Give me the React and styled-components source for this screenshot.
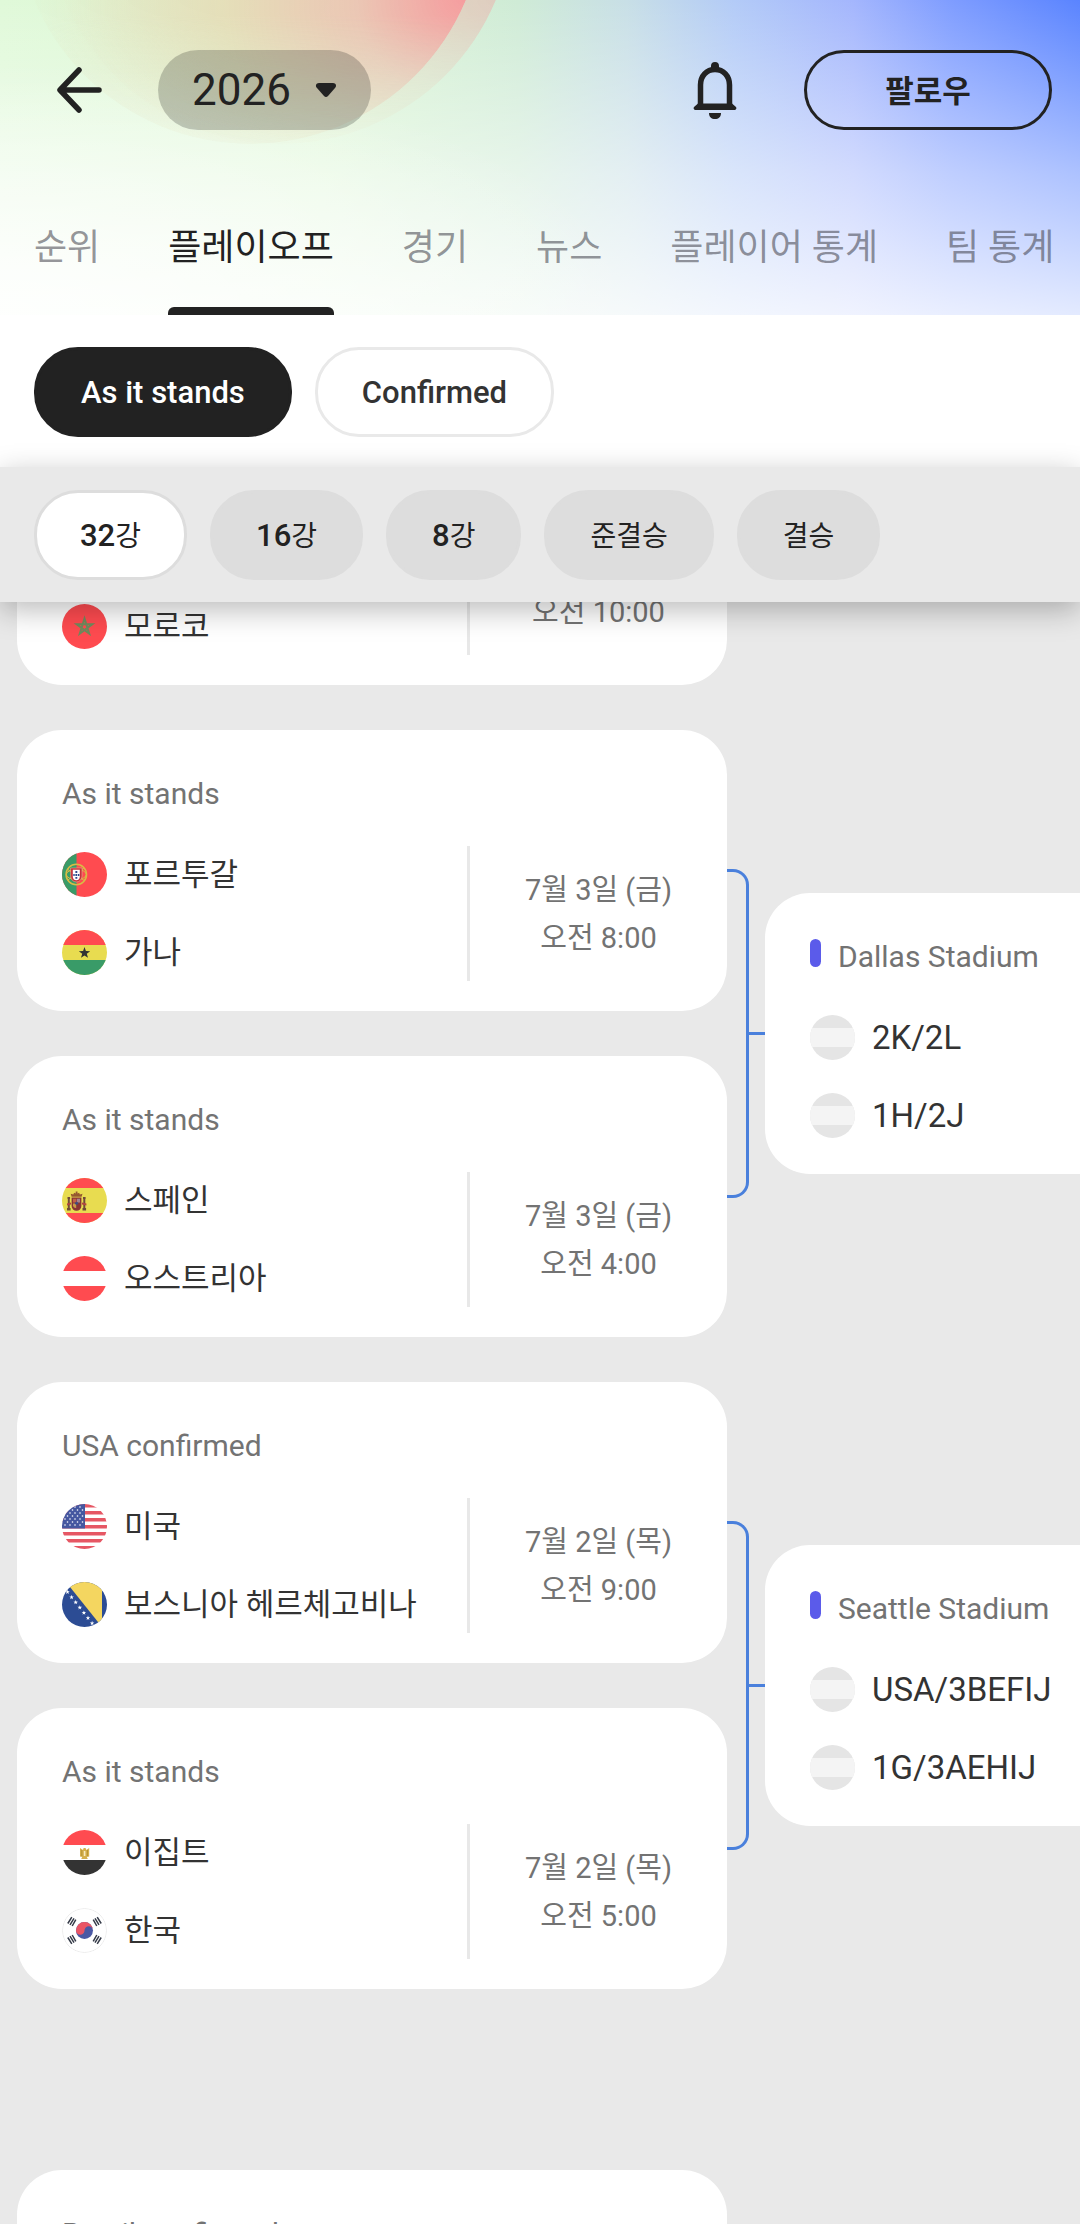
import React from 'react'
import styled, { createGlobalStyle } from 'styled-components'

const tabs = ['순위', '플레이오프', '경기', '뉴스', '플레이어 통계', '팀 통계']
const rounds = [['32', '강'], ['16', '강'], ['8', '강'], ['', '준결승'], ['', '결승']]

const pairs = [
  {
    // mostly scrolled away under the round bar
    games: [{ teams: [['', ''], ['ma', '모로코']], time: '오전 10:00' }],
  },
  {
    games: [
      { title: 'As it stands', teams: [['pt', '포르투갈'], ['gh', '가나']], date: '7월 3일 (금)', time: '오전 8:00' },
      { title: 'As it stands', teams: [['es', '스페인'], ['at', '오스트리아']], date: '7월 3일 (금)', time: '오전 4:00' },
    ],
    next: { title: 'Dallas Stadium', teams: ['2K/2L', '1H/2J'] },
  },
  {
    games: [
      { title: 'USA confirmed', teams: [['us', '미국'], ['ba', '보스니아 헤르체고비나']], date: '7월 2일 (목)', time: '오전 9:00' },
      { title: 'As it stands', teams: [['eg', '이집트'], ['kr', '한국']], date: '7월 2일 (목)', time: '오전 5:00' },
    ],
    next: { title: 'Seattle Stadium', teams: ['USA/3BEFIJ', '1G/3AEHIJ'] },
  },
  {
    last: true,
    games: [{ title: 'Brazil confirmed' }],
  },
]

const star = (cx, cy, r) => {
  const pts = []
  for (let i = 0; i < 10; i++) {
    const a = (Math.PI / 5) * i - Math.PI / 2
    const k = i % 2 ? r * 0.4 : r
    pts.push(`${(cx + k * Math.cos(a)).toFixed(2)},${(cy + k * Math.sin(a)).toFixed(2)}`)
  }
  return pts.join(' ')
}

const art = {
  tbd: (
    <>
      <rect width="45" height="45" fill="#e5e5e5" />
      <rect y="13" width="45" height="19" fill="#f4f4f4" />
    </>
  ),
  ma: (
    <>
      <rect width="45" height="45" fill="#ff4b50" />
      <path d="M22.5 14.500l4.700 15-12.500-9.300h15.600l-12.500 9.300z" fill="none" stroke="#6f8b5c" strokeWidth="2" />
    </>
  ),
  pt: (
    <>
      <rect width="45" height="45" fill="#ff4b50" />
      <rect width="14.5" height="45" fill="#399b68" />
      <circle cx="14.3" cy="22.5" r="10.2" fill="none" stroke="#d8bb45" strokeWidth="1.6" />
      <ellipse cx="14.3" cy="22.5" rx="10" ry="5" fill="none" stroke="#d8bb45" strokeWidth="1" />
      <path d="M5 17l18 12M6 28L22 16" stroke="#d8bb45" strokeWidth="1" />
      <path d="M8.6 16h11.4v8a5.7 6 0 0 1-11.4 0z" fill="#c8323c" stroke="#e8c8a0" strokeWidth="0.5" />
      <path d="M10.8 17.8h7v6.4a3.5 4 0 0 1-7 0z" fill="#fff" />
      <path d="M13.4 19h1.9v1.9h-1.9zM13.4 22h1.9v1.9h-1.9zM13.4 25h1.9v1.7h-1.9zM11.3 22h1.4v1.9h-1.4zM16 22h1.4v1.9H16z" fill="#2c4a8c" />
    </>
  ),
  gh: (
    <>
      <rect width="45" height="45" fill="#e8dc50" />
      <rect width="45" height="15" fill="#ff4b50" />
      <rect y="30" width="45" height="15" fill="#399b68" />
      <polygon points={star(22.5, 23, 6)} fill="#333" />
    </>
  ),
  es: (
    <>
      <rect width="45" height="45" fill="#e8dc50" />
      <rect width="45" height="10" fill="#ff4b50" />
      <rect y="35" width="45" height="10" fill="#ff4b50" />
      <path d="M5.5 19h2.6v2H7.8v9h.8v2.4H5v-2.4h.8v-9h-.3zM21 19h2.6v2h-.3v9h.8v2.4h-3.6v-2.4h.8v-9H21z" fill="#6f4a38" />
      <path d="M5 25.5l4-1v2l-4 1zM20 24.5l4.4 1v2l-4.4-1z" fill="#b04440" />
      <path d="M9.6 19.6h9.8V28a4.9 4.8 0 0 1-9.8 0z" fill="#8a3434" />
      <path d="M11 20.8h3.2v3.6H11z" fill="#c06048" />
      <path d="M14.8 20.8H18v3.6h-3.2z" fill="#a7838c" />
      <path d="M11 25.6h3.2V30a3 3 0 0 1-3.2-2z" fill="#c89a48" />
      <circle cx="14.6" cy="25.2" r="1.5" fill="#3c4c80" />
      <path d="M9.6 18.8l-.9-3 2.6.6.8-1.6 1.6.8V13.4h1.8v2.2l1.6-.8.8 1.6 2.6-.6-.9 3z" fill="#95592f" />
    </>
  ),
  at: (
    <>
      <rect width="45" height="45" fill="#fff" />
      <rect width="45" height="15" fill="#ff4b50" />
      <rect y="30" width="45" height="15" fill="#ff4b50" />
    </>
  ),
  us: (
    <>
      <rect width="45" height="45" fill="#fff" />
      {[0, 1, 2, 3, 4, 5, 6].map((i) => (
        <rect key={i} y={i * 7} width="45" height="3.5" fill="#e65764" />
      ))}
      <rect width="23" height="24.5" fill="#4557a0" />
      {[2, 5, 8, 11, 14, 17, 20].map((y, r) =>
        [3, 8, 13, 18].map((x) => (
          <circle key={`${x}-${y}`} cx={x + (r % 2) * 2.5} cy={y + 1} r="0.8" fill="#fff" />
        ))
      )}
    </>
  ),
  ba: (
    <>
      <rect width="45" height="45" fill="#2c4c94" />
      <path d="M4 0h36v45z" fill="#f4d660" />
      {[0, 1, 2, 3, 4, 5, 6].map((i) => (
        <polygon key={i} points={star(5.5 + i * 4.1, 10 + i * 5.2, 2.4)} fill="#fff" />
      ))}
    </>
  ),
  eg: (
    <>
      <rect width="45" height="45" fill="#fff" />
      <rect width="45" height="15" fill="#ff4b50" />
      <rect y="30" width="45" height="15" fill="#333" />
      <path d="M18 18l3 2 .6-2h2l.6 2 3-2v8.5l-2.4.5 1 2h-6.6l1-2-2.2-.5z" fill="#d5b04c" />
      <path d="M21.8 21h1.6v5h-1.6z" fill="#f8ebc0" />
      <path d="M19.8 20v6M25.4 20v6" stroke="#a98426" strokeWidth="0.7" />
    </>
  ),
  kr: (
    <>
      <circle cx="22.5" cy="22.5" r="22" fill="#fff" stroke="#ececec" />
      <circle cx="22.5" cy="22.5" r="8.5" fill="#4a58a4" />
      <path d="M14 22.5a8.5 8.5 0 0 1 17 0 4.25 4.25 0 0 0-8.5 0 4.25 4.25 0 0 1-8.5 0z" fill="#ea5565" />
      <g stroke="#353b48" strokeWidth="1.5">
        <path d="M5.8 15.5l4-6.4M8 16.8l4-6.4M10.2 18l3.6-6.4" />
        <path d="M39.2 15.5l-4-6.4M37 16.8l-4-6.4M34.8 18l-3.6-6.4" />
        <path d="M5.8 29.5l4 6.4M8 28.2l4 6.4M10.2 27l3.6 6.4" />
        <path d="M39.2 29.5l-4 6.4M37 28.2l-4 6.4M34.8 27l-3.6 6.4" />
      </g>
    </>
  ),
}

const Flag = ({ code }) => (
  <FlagIcon viewBox="0 0 45 45" aria-hidden="true">
    {art[code]}
  </FlagIcon>
)

const Game = ({ game }) => (
  <Card>
    <CardTitle>{game.title}</CardTitle>
    {game.teams && (
      <CardBody>
        <Teams>
          {game.teams.map(([code, name]) => (
            <Team key={name}>
              <Flag code={code} />
              <TeamName>{name}</TeamName>
            </Team>
          ))}
        </Teams>
        <Kickoff>
          <KickoffLine>{game.date}</KickoffLine>
          <KickoffLine>{game.time}</KickoffLine>
        </Kickoff>
      </CardBody>
    )}
  </Card>
)

const NextGame = ({ game }) => (
  <Card>
    <CardTitle>
      <Marker />
      {game.title}
    </CardTitle>
    <CardBody>
      <Teams>
        {game.teams.map((name) => (
          <Team key={name}>
            <Flag code="tbd" />
            <TeamName $latin>{name}</TeamName>
          </Team>
        ))}
      </Teams>
    </CardBody>
  </Card>
)

const App = () => {
  return (
    <Page>
      <GlobalStyle />
      <Header>
        <RedGlow $faint />
        <RedGlow />
        <TopBar>
          <IconButton aria-label="뒤로">
            <svg width="46" height="46" viewBox="0 0 46 46" fill="none" stroke="#222" strokeWidth="5.5" strokeLinecap="round" strokeLinejoin="round">
              <path d="M43 23H6M23 3L4 23l19 20" />
            </svg>
          </IconButton>
          <YearButton>
            2026
            <svg width="22" height="16" viewBox="0 0 22 16" aria-hidden="true">
              <path d="M4 1h14c3 0 4 3 2 5l-7 8c-1.2 1.3-2.8 1.3-4 0L2 6C0 4 1 1 4 1z" fill="#222" />
            </svg>
          </YearButton>
          <Spacer />
          <IconButton aria-label="알림">
            <svg width="46" height="58" viewBox="0 0 46 58" aria-hidden="true">
              <path d="M8.5 45V24c0-9 6-15.5 14.5-15.5S37.5 15 37.5 24v21" fill="none" stroke="#222" strokeWidth="5.5" />
              <path d="M19 9V5a4 4 0 0 1 8 0v4zM6 42.5h34l4 3.5c1 1.5 0 3-1.5 3h-39C2 49 1 47.5 2 46zM17 52h12c0 4-2.5 6-6 6s-6-2-6-6z" fill="#222" />
            </svg>
          </IconButton>
          <FollowButton>팔로우</FollowButton>
        </TopBar>
        <Tabs>
          {tabs.map((t, i) => (
            <Tab key={t} href="#" $active={i === 1}>{t}</Tab>
          ))}
        </Tabs>
      </Header>
      <Filters>
        <Chip $dark>As it stands</Chip>
        <Chip>Confirmed</Chip>
      </Filters>
      <Rounds>
        {rounds.map(([num, label], i) => (
          <RoundChip key={num + label} $active={i === 0}>
            {num && <Num>{num}</Num>}
            {label}
          </RoundChip>
        ))}
      </Rounds>
      <Board>
        <Bracket>
          {pairs.map((pair, i) => (
            <Pair key={i} $last={pair.last}>
              <Games>
                {pair.games.map((g, n) => (
                  <Game key={n} game={g} />
                ))}
              </Games>
              {pair.next && (
                <>
                  <Elbow />
                  <Link />
                  <NextGame game={pair.next} />
                </>
              )}
            </Pair>
          ))}
        </Bracket>
      </Board>
    </Page>
  )
}

export default App

const GlobalStyle = createGlobalStyle`
  * {
    box-sizing: border-box;
  }
  body {
    margin: 0;
    background: #e9e9e9;
    font-family: Roboto, "Noto Sans CJK KR", sans-serif;
    color: #333;
  }
  button {
    font-family: inherit;
    cursor: pointer;
  }
`

const Page = styled.div`
  height: 100vh;
  display: flex;
  flex-direction: column;
  overflow: hidden;
`

const Header = styled.header`
  flex: none;
  display: flex;
  flex-direction: column;
  position: relative;
  overflow: hidden;
  background:
    radial-gradient(ellipse 60% 80% at 0 100%, rgba(255, 255, 255, 0.8), rgba(255, 255, 255, 0)),
    linear-gradient(to bottom, rgba(255, 255, 255, 0) 0, rgba(255, 255, 255, 0.5) 55%, rgba(255, 255, 255, 0.83) 100%),
    linear-gradient(to right, #e0f9d9 0, #daf6d2 30%, #cfebd6 48%, #c8dfe6 58%, #b3cbf7 68%, #a4b6fd 79%, #7f9dff 88%, #5a84ff 100%);
`

/* soft red disc hanging from the top edge */
const RedGlow = styled.div`
  position: absolute;
  top: -324px;
  left: ${(p) => (p.$faint ? '46px' : '16px')};
  width: 468px;
  height: 468px;
  border-radius: 50%;
  opacity: ${(p) => (p.$faint ? 0.4 : 1)};
  background: radial-gradient(circle at 450px 320px, #f59c9e 0, rgba(236, 195, 178, 0.9) 110px, rgba(230, 218, 180, 0.8) 240px, rgba(228, 228, 190, 0) 440px);
  mask-image: linear-gradient(to bottom, #000 340px, rgba(0, 0, 0, 0.35) 440px, rgba(0, 0, 0, 0.15) 468px);
`

const TopBar = styled.div`
  position: relative;
  display: flex;
  align-items: center;
  height: 180px;
  padding: 0 28px 0 56px;
`

const IconButton = styled.button`
  display: flex;
  padding: 0;
  border: none;
  background: none;
`

const YearButton = styled.button`
  display: flex;
  align-items: center;
  gap: 24px;
  height: 80px;
  margin-left: 56px;
  padding: 0 34px;
  border: none;
  border-radius: 40px;
  background: rgba(0, 0, 0, 0.2);
  color: #222;
  font-size: 44px;
`

const Spacer = styled.div`
  flex: 1;
`

const FollowButton = styled.button`
  width: 248px;
  height: 80px;
  margin-left: 66px;
  padding: 0 0 4px;
  border: 3px solid #222;
  border-radius: 40px;
  background: none;
  color: #222;
  font-size: 31px;
  font-weight: 700;
`

const Tabs = styled.nav`
  position: relative;
  display: flex;
  gap: 68px;
  height: 135px;
  padding: 0 34px;
`

const Tab = styled.a`
  flex: none;
  display: grid;
  grid-template-rows: 1fr 8px;
  align-items: center;
  color: ${(p) => (p.$active ? '#222' : 'rgba(60, 60, 70, 0.55)')};
  font-size: 36px;
  text-decoration: none;
  white-space: nowrap;

  &::after {
    content: '';
    height: 8px;
    border-radius: 6px 6px 0 0;
    background: ${(p) => (p.$active ? '#222' : 'transparent')};
  }
`

const Filters = styled.div`
  flex: none;
  display: flex;
  gap: 23px;
  padding: 32px 34px 30px;
  background: #fff;
`

const Chip = styled.button`
  height: 90px;
  padding: 0 44px;
  border: 3px solid ${(p) => (p.$dark ? '#222' : '#e9e9e9')};
  border-radius: 44px;
  background: ${(p) => (p.$dark ? '#222' : '#fff')};
  color: ${(p) => (p.$dark ? '#fff' : '#333')};
  font-size: 31px;
  font-weight: 500;
`

const Rounds = styled.div`
  flex: none;
  display: flex;
  gap: 23px;
  padding: 23px 34px 22px;
  background: #e9e9e9;
  box-shadow: 0 8px 28px rgba(0, 0, 0, 0.27);
  z-index: 1;
`

const RoundChip = styled.button`
  height: 90px;
  padding: 0 43px 2px;
  border: 3px solid #ddd;
  border-radius: 44px;
  background: ${(p) => (p.$active ? '#fff' : '#ddd')};
  color: #222;
  font-size: 28px;
`

const Num = styled.span`
  font-size: 31px;
  font-weight: 500;
`

const Board = styled.main`
  flex: 1;
  min-height: 0;
  overflow: hidden;
`

/* scrolled part way through the first card */
const Bracket = styled.div`
  margin-top: -198px;
  padding: 0 17px;
  display: flex;
  flex-direction: column;
  gap: 45px;
`

const Pair = styled.div`
  display: flex;
  align-items: center;
  margin-top: ${(p) => (p.$last ? '136px' : '0')};
`

const Games = styled.div`
  flex: none;
  display: flex;
  flex-direction: column;
  gap: 45px;
`

const Card = styled.article`
  flex: none;
  width: 710px;
  height: 281px;
  padding: 40px 0 30px 45px;
  border-radius: 45px;
  background: #fff;
`

const CardTitle = styled.h3`
  display: flex;
  gap: 17px;
  height: 48px;
  margin: 0 0 28px;
  color: #737373;
  font-size: 30px;
  font-weight: 400;
  line-height: 48px;
`

const Marker = styled.span`
  width: 11px;
  height: 28px;
  margin-top: 6px;
  border-radius: 6px;
  background: #5b5bea;
`

const CardBody = styled.div`
  display: flex;
  height: 135px;
`

const Teams = styled.div`
  flex: none;
  width: 405px;
  display: flex;
  flex-direction: column;
  gap: 33px;
  padding-top: 6px;
`

const Team = styled.div`
  display: flex;
  align-items: center;
  gap: 17px;
  height: 45px;
`

const FlagIcon = styled.svg`
  flex: none;
  width: 45px;
  height: 45px;
  border-radius: 50%;
`

const TeamName = styled.span`
  color: #333;
  font-size: ${(p) => (p.$latin ? '33px' : '31px')};
  line-height: 45px;
  white-space: nowrap;
`

const Kickoff = styled.div`
  flex: 1;
  display: flex;
  flex-direction: column;
  align-items: center;
  justify-content: center;
  border-left: 3px solid #e8e8e8;
`

const KickoffLine = styled.span`
  height: 48px;
  color: #737373;
  font-size: 29px;
  line-height: 48px;
`

/* right half of a rounded box joining the two cards */
const Elbow = styled.div`
  flex: none;
  width: 22px;
  height: 329px;
  border: 3px solid #4a80dc;
  border-left: none;
  border-radius: 0 16px 16px 0;
`

const Link = styled.div`
  flex: none;
  width: 16px;
  height: 3px;
  background: #4a80dc;
`
